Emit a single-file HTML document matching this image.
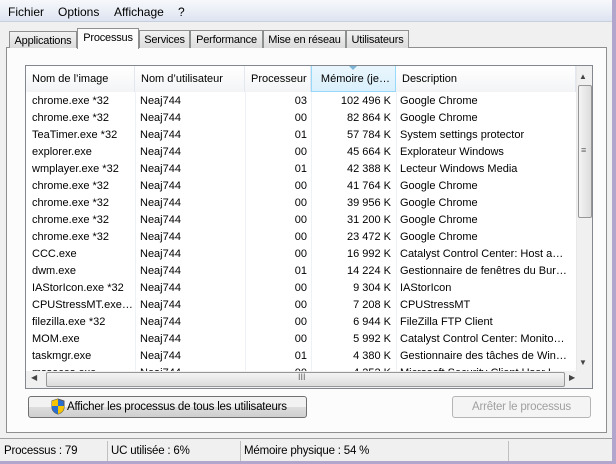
<!DOCTYPE html>
<html><head><meta charset="utf-8"><style>
*{margin:0;padding:0;box-sizing:border-box}
body{width:616px;height:464px;background:#f0f0f0;font-family:"Liberation Sans",sans-serif;font-size:11px;color:#000;position:relative;overflow:hidden}
.a{position:absolute}
.menu{left:0;top:0;width:612px;height:22px;background:linear-gradient(#f7f8fb,#dde4f1);border-bottom:1px solid #c9d0dd}
.menu span{position:absolute;top:5px;font-size:12px}
.tab{position:absolute;top:30px;height:18px;border:1px solid #8e8f8f;border-bottom:none;background:linear-gradient(#f2f2f2,#dcdcdc);font-size:11px;padding-top:3px;text-align:center;white-space:nowrap;overflow:hidden;letter-spacing:-0.2px}
.panel{left:6px;top:47px;width:601px;height:386px;border:1px solid #8e8f8f;background:#fcfcfc}
.lv{left:25px;top:65px;width:568px;height:324px;border:1px solid #828790;background:#fff;overflow:hidden}
.hd{position:absolute;top:0;height:26px;border-right:1px solid #e3e8f0;background:linear-gradient(#fff,#f3f4f6);padding:7px 0 0 6px;font-size:11px;white-space:nowrap;overflow:hidden}
.row{position:absolute;left:0;height:17px;width:550px;font-size:11px;white-space:nowrap}
.row span{position:absolute;top:2px}
.vl{position:absolute;top:26px;width:1px;height:280px;background:#eef1f6}
.btn{position:absolute;height:22px;border:1px solid #707070;border-radius:3px;background:linear-gradient(#f2f2f2 50%,#dddddd 50%,#cfcfcf);font-size:11.5px;padding-top:4px;white-space:nowrap;letter-spacing:-0.2px}
.sb{top:438px;height:26px;border-top:1px solid #a0a0a0}
.sep{position:absolute;top:441px;width:1px;height:20px;background:#c0c0c0}
.st{position:absolute;top:445px;font-size:11.5px;letter-spacing:-0.2px}
</style></head><body>
<div class="a menu"><span style="left:8px">Fichier</span><span style="left:58px">Options</span><span style="left:114px">Affichage</span><span style="left:178px">?</span></div>
<div class="a" style="left:612px;top:0;width:4px;height:464px;background:#b3a6cc"></div>
<div class="a" style="left:0;top:461px;width:616px;height:3px;background:#b3a6cc"></div>
<div class="a panel"></div>
<div class="tab" style="left:9px;top:31px;height:17px;width:68px">Applications</div>
<div class="tab" style="left:139px;width:51px">Services</div>
<div class="tab" style="left:190px;width:73px">Performance</div>
<div class="tab" style="left:263px;width:83px">Mise en réseau</div>
<div class="tab" style="left:346px;width:63px">Utilisateurs</div>
<div class="tab" style="left:77px;top:28px;height:21px;width:62px;background:#fcfcfc">Processus</div>
<div class="a lv">
<div class="hd" style="left:0;width:109px">Nom de l’image</div>
<div class="hd" style="left:109px;width:110px">Nom d’utilisateur</div>
<div class="hd" style="left:219px;width:66px;text-align:right;padding-right:4px">Processeur</div>
<div class="hd" style="left:285px;width:85px;background:linear-gradient(#eaf6fd,#d9f0fc);border:1px solid #96d9f9;border-top:none;text-align:right;padding-right:5px">Mémoire (je…</div>
<div class="a" style="left:323px;top:0;width:0;height:0;border-left:4px solid transparent;border-right:4px solid transparent;border-top:4px solid #7db6d8"></div>
<div class="hd" style="left:370px;width:180px">Description</div>
<div class="vl" style="left:109px"></div><div class="vl" style="left:219px"></div><div class="vl" style="left:285px"></div><div class="vl" style="left:370px"></div>
<div id="rows"></div>
<div class="a" style="left:550px;top:0;width:17px;height:305px;background:#f0f0f0;border-left:1px solid #e8e8e8"></div>
<div class="a" style="left:553px;top:6px;font-size:8px;color:#444">▲</div>
<div class="a" style="left:552px;top:19px;width:14px;height:133px;border:1px solid #979797;border-radius:2px;background:linear-gradient(90deg,#f4f4f4,#dcdcdc)"></div>
<div class="a" style="left:555px;top:79px;font-size:9px;color:#666">≡</div>
<div class="a" style="left:553px;top:292px;font-size:8px;color:#444">▼</div>
<div class="a" style="left:0;top:305px;width:567px;height:17px;background:#f0f0f0"></div>
<div class="a" style="left:5px;top:307px;font-size:8px;color:#444">◀</div>
<div class="a" style="left:20px;top:306px;width:519px;height:15px;border:1px solid #979797;border-radius:2px;background:linear-gradient(#f4f4f4,#dcdcdc)"></div>
<div class="a" style="left:272px;top:306px;font-size:9px;color:#666">III</div>
<div class="a" style="left:543px;top:307px;font-size:8px;color:#444">▶</div>
</div>
<div class="btn" style="left:28px;top:396px;width:279px;padding-left:38px">Afficher les processus de tous les utilisateurs</div>
<svg class="a" style="left:51px;top:398px" width="14" height="17" viewBox="0 0 14 17"><path d="M7 1L1 3v6c0 4 3 6 6 7 3-1 6-3 6-7V3z" fill="#2a6fd0" stroke="#555"/><path d="M7 1v15c3-1 6-3 6-7V8H1V3z" fill="#f6c400"/><path d="M7 8H1v1c0 4 3 6 6 7z" fill="#2a6fd0"/></svg>
<div class="btn" style="left:452px;top:396px;width:139px;text-align:center;color:#a0a0a0;border-color:#b5b5b5;background:#f4f4f4">Arrêter le processus</div>
<div class="a sb" style="left:0;width:612px"></div>
<div class="st" style="left:4px">Processus : 79</div>
<div class="st" style="left:111px">UC utilisée : 6%</div>
<div class="st" style="left:244px">Mémoire physique : 54 %</div>
<div class="sep" style="left:107px"></div><div class="sep" style="left:240px"></div><div class="sep" style="left:508px"></div>
<script>
var d=[["chrome.exe *32","03","102 496 K","Google Chrome"],["chrome.exe *32","00","82 864 K","Google Chrome"],["TeaTimer.exe *32","01","57 784 K","System settings protector"],["explorer.exe","00","45 664 K","Explorateur Windows"],["wmplayer.exe *32","01","42 388 K","Lecteur Windows Media"],["chrome.exe *32","00","41 764 K","Google Chrome"],["chrome.exe *32","00","39 956 K","Google Chrome"],["chrome.exe *32","00","31 200 K","Google Chrome"],["chrome.exe *32","00","23 472 K","Google Chrome"],["CCC.exe","00","16 992 K","Catalyst Control Center: Host a…"],["dwm.exe","01","14 224 K","Gestionnaire de fenêtres du Bur…"],["IAStorIcon.exe *32","00","9 304 K","IAStorIcon"],["CPUStressMT.exe…","00","7 208 K","CPUStressMT"],["filezilla.exe *32","00","6 944 K","FileZilla FTP Client"],["MOM.exe","00","5 992 K","Catalyst Control Center: Monito…"],["taskmgr.exe","01","4 380 K","Gestionnaire des tâches de Win…"],["msseces.exe","00","4 252 K","Microsoft Security Client User I…"]];
var h="";d.forEach(function(r,i){h+='<div class="row" style="top:'+(27+i*17)+'px"><span style="left:6px">'+r[0]+'</span><span style="left:114px">Neaj744</span><span style="left:219px;width:62px;text-align:right">'+r[1]+'</span><span style="left:285px;width:80px;text-align:right">'+r[2]+'</span><span style="left:374px">'+r[3]+'</span></div>'});
document.getElementById("rows").innerHTML=h;
</script>
</body></html>
